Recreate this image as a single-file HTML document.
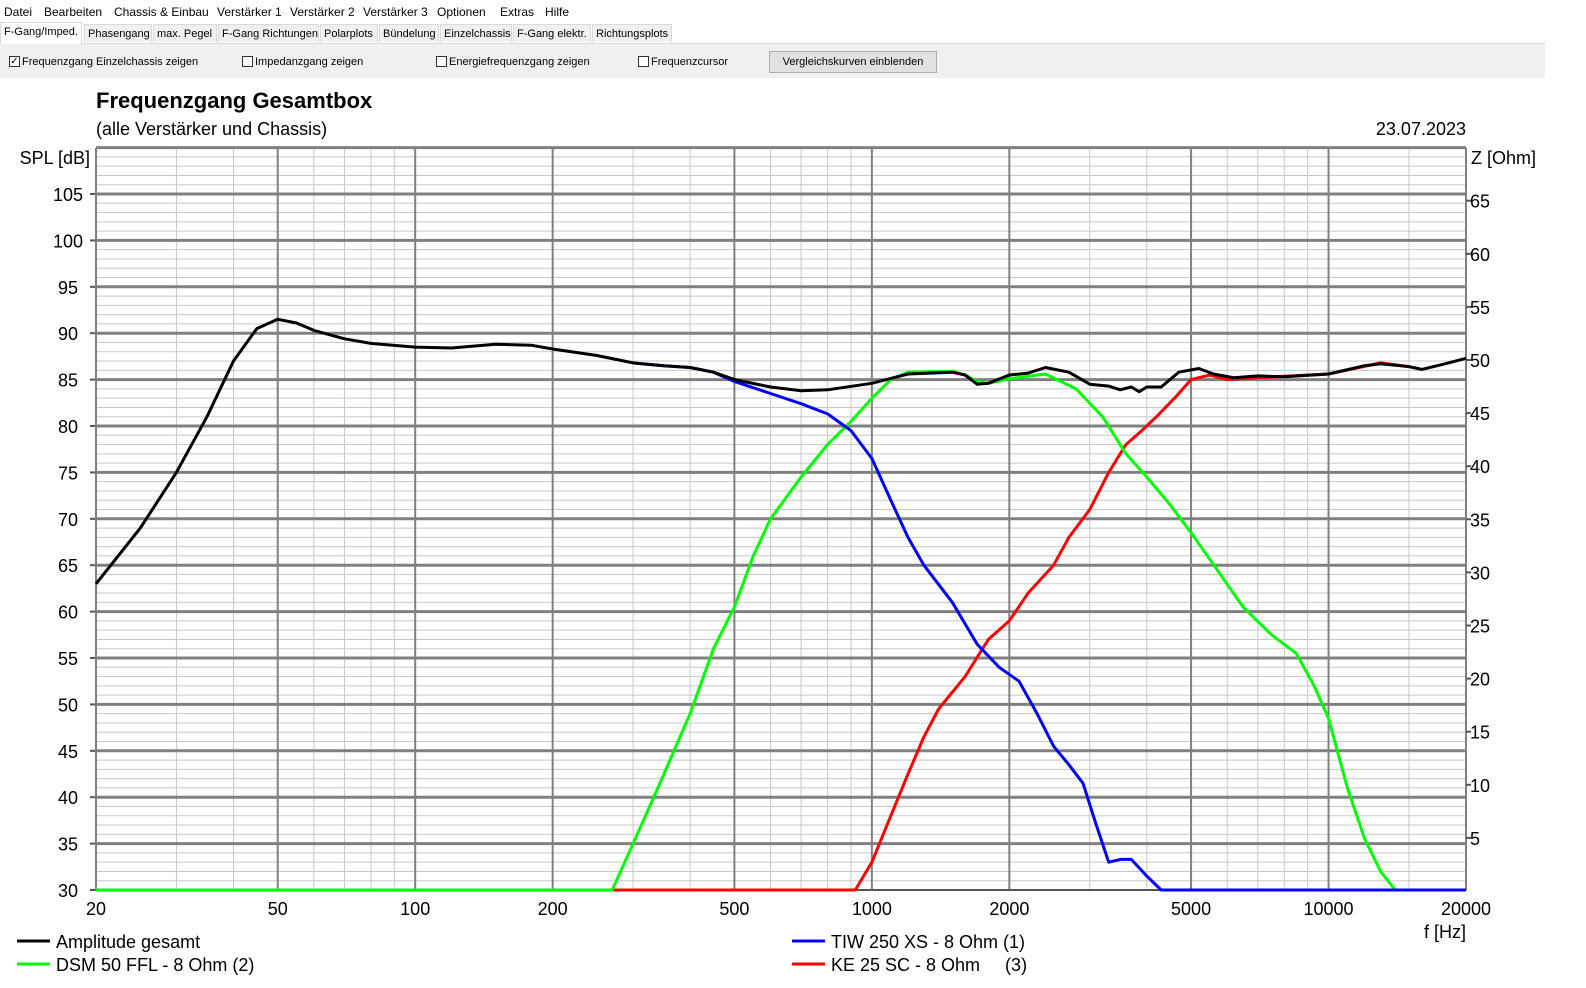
<!DOCTYPE html>
<html style="margin:0;padding:0;overflow:hidden"><head><meta charset="utf-8"><style>
html,body{margin:0;padding:0;overflow:hidden;background:#fff}
#root{position:fixed;left:0;top:0;width:1586px;height:988px;overflow:hidden;background:#fff;font-family:"Liberation Sans",sans-serif;transform-origin:0 0}
.menu{position:absolute;top:0;left:0;width:1586px;height:22px;font-size:12px}
.menu span{position:absolute;top:5px;white-space:nowrap}
.tabs{position:absolute;top:22px;left:0;width:1545px;height:21px;border-bottom:1px solid #d9d9d9;font-size:11px}
.tab{position:absolute;top:2px;height:18px;border:1px solid #d9d9d9;border-bottom:none;background:#f0f0f0;line-height:18px;padding:0 3px;box-sizing:border-box;white-space:nowrap;overflow:hidden}
.bar{position:absolute;top:44px;left:0;width:1545px;height:34px;background:#f0f0f0;font-size:11px}
.cb{position:absolute;top:12px;height:12px;line-height:12px;white-space:nowrap}
.cb i{display:inline-block;width:11px;height:11px;border:1px solid #333;background:#fff;vertical-align:top;margin-right:2px;box-sizing:border-box;font-style:normal;font-size:10px;line-height:10px;text-align:center}
.btn{position:absolute;left:769px;top:7px;width:168px;height:22px;border:1px solid #adadad;background:#e1e1e1;text-align:center;line-height:20px;box-sizing:border-box}
svg{display:block}
</style></head><body>
<div id="root">
<div class="menu"><span style="left:4px">Datei</span><span style="left:44px">Bearbeiten</span><span style="left:114px">Chassis &amp; Einbau</span><span style="left:217px">Verstärker 1</span><span style="left:290px">Verstärker 2</span><span style="left:363px">Verstärker 3</span><span style="left:437px">Optionen</span><span style="left:500px">Extras</span><span style="left:545px">Hilfe</span></div>
<div class="tabs">
<div class="tab" style="left:0;top:0;height:22px;width:82px;background:#fff">F-Gang/Imped.</div>
<div class="tab" style="left:84px;width:68px">Phasengang</div>
<div class="tab" style="left:153px;width:64px">max. Pegel</div>
<div class="tab" style="left:218px;width:101px">F-Gang Richtungen</div>
<div class="tab" style="left:320px;width:58px">Polarplots</div>
<div class="tab" style="left:379px;width:60px">Bündelung</div>
<div class="tab" style="left:440px;width:72px">Einzelchassis</div>
<div class="tab" style="left:513px;width:78px">F-Gang elektr.</div>
<div class="tab" style="left:592px;width:80px">Richtungsplots</div>
</div>
<div class="bar">
<div class="cb" style="left:9px"><i>✓</i>Frequenzgang Einzelchassis zeigen</div>
<div class="cb" style="left:242px"><i></i>Impedanzgang zeigen</div>
<div class="cb" style="left:436px"><i></i>Energiefrequenzgang zeigen</div>
<div class="cb" style="left:638px"><i></i>Frequenzcursor</div>
<div class="btn">Vergleichskurven einblenden</div>
</div>
<svg id="s" width="1586" height="988" style="position:absolute;left:0;top:0" font-family="Liberation Sans, sans-serif">
<g id="grid"></g>
<text x="96" y="108" font-size="22" font-weight="bold">Frequenzgang Gesamtbox</text>
<text x="96" y="135" font-size="18">(alle Verstärker und Chassis)</text>
<text x="1466" y="135" font-size="18" text-anchor="end">23.07.2023</text>
<text x="90" y="164" font-size="18" text-anchor="end">SPL [dB]</text>
<text x="1471" y="164" font-size="18">Z [Ohm]</text>
<text x="1466" y="938" font-size="18" text-anchor="end">f [Hz]</text>
<g id="lab" font-size="18"></g>
<g id="curves" fill="none" stroke-width="3" stroke-linejoin="round"></g>
<g font-size="18">
<line x1="17" y1="941" x2="50" y2="941" stroke="#000" stroke-width="3"/><text x="56" y="948">Amplitude gesamt</text>
<line x1="17" y1="964" x2="50" y2="964" stroke="#0f0" stroke-width="3"/><text x="56" y="971">DSM 50 FFL - 8 Ohm (2)</text>
<line x1="792" y1="941" x2="825" y2="941" stroke="#00f" stroke-width="3"/><text x="831" y="948">TIW 250 XS - 8 Ohm (1)</text>
<line x1="792" y1="964" x2="825" y2="964" stroke="#f00" stroke-width="3"/><text x="831" y="971" xml:space="preserve">KE 25 SC - 8 Ohm     (3)</text>
</g>
</svg>
</div>
<script>
const NS="http://www.w3.org/2000/svg";
const X0=96,X1=1466,Y0=148,Y1=890;
const fx=f=>X0+456.67*Math.log10(f/20);
const dy=d=>890-(d-30)*9.28;
const g=document.getElementById('grid'),lab=document.getElementById('lab');
function ln(x1,y1,x2,y2,c,w){const l=document.createElementNS(NS,'line');l.setAttribute('x1',x1);l.setAttribute('y1',y1);l.setAttribute('x2',x2);l.setAttribute('y2',y2);l.setAttribute('stroke',c);l.setAttribute('stroke-width',w);g.appendChild(l);}
function tx(x,y,s,a){const t=document.createElementNS(NS,'text');t.setAttribute('x',x);t.setAttribute('y',y);t.setAttribute('text-anchor',a);t.textContent=s;lab.appendChild(t);}
for(let d=31;d<110;d++){if(d%5)ln(X0,dy(d),X1,dy(d),'#c8c8c8',1);}
[30,40,60,70,80,90,300,400,600,700,800,900,3000,4000,6000,7000,8000,9000,15000].forEach(f=>ln(fx(f),Y0,fx(f),Y1,'#c8c8c8',1));
for(let d=30;d<=110;d+=5){if(d>30)ln(X0,dy(d),X1,dy(d),'#808080',3);if(d<=105){ln(X0-6,dy(d),X0,dy(d),'#555',2);tx(68,dy(d)+7,d,'middle');}}
[20,50,100,200,500,1000,2000,5000,10000,20000].forEach(f=>{ln(fx(f),Y0,fx(f),Y1,'#808080',2);tx(fx(f),915,f,'middle');});
ln(X0,Y1,X1,Y1,'#555',2);
for(let z=5;z<=65;z+=5){const y=891-z*10.62;ln(X1,y,X1+5,y,'#555',2);tx(1470,y+7,z,'start');}
const C={
"#000":[[20,63],[25,69],[30,75],[35,81],[40,87],[45,90.5],[50,91.5],[55,91.1],[60,90.3],[70,89.4],[80,88.9],[100,88.5],[120,88.4],[150,88.8],[180,88.7],[200,88.3],[250,87.6],[300,86.8],[350,86.5],[400,86.3],[450,85.8],[500,85.0],[600,84.2],[700,83.8],[800,83.9],[1000,84.6],[1200,85.6],[1500,85.8],[1600,85.5],[1700,84.5],[1800,84.6],[2000,85.5],[2200,85.7],[2400,86.3],[2700,85.8],[3000,84.5],[3300,84.3],[3500,83.9],[3700,84.2],[3850,83.7],[4000,84.2],[4300,84.2],[4700,85.8],[5200,86.2],[5600,85.6],[6200,85.2],[7000,85.4],[8000,85.3],[10000,85.6],[12000,86.5],[13000,86.7],[15000,86.4],[16000,86.1],[18000,86.7],[20000,87.3]],
"#f00":[[20,30],[920,30],[1000,33],[1100,38],[1200,42.5],[1300,46.5],[1400,49.5],[1600,53],[1800,57],[2000,59],[2200,62],[2500,65],[2700,68],[3000,71],[3300,75],[3600,78],[3900,79.5],[4200,81],[4600,83],[5000,85],[5500,85.5],[6000,85],[7000,85.2],[10000,85.6],[13000,86.8],[15000,86.4]],
"#0f0":[[20,30],[270,30],[300,35],[340,41],[400,49],[450,56],[500,60.5],[550,66],[600,70],[700,74.5],[800,78],[900,80.5],[1000,83],[1100,85],[1200,85.8],[1500,85.9],[1600,85.5],[1700,84.8],[1800,84.6],[2000,85.1],[2400,85.6],[2800,84],[3200,81],[3600,77],[4000,74.5],[4500,71.5],[5000,68.5],[5700,64.5],[6500,60.5],[7500,57.5],[8500,55.5],[9300,52],[10000,48.5],[11000,41],[12000,35.5],[13000,32],[14000,30],[20000,30]],
"#00f":[[300,86.8],[350,86.5],[400,86.3],[450,85.8],[500,84.8],[600,83.5],[700,82.4],[800,81.3],[900,79.5],[1000,76.5],[1100,72],[1200,68],[1300,65],[1500,61],[1700,56.5],[1900,54],[2100,52.5],[2300,49],[2500,45.5],[2700,43.5],[2900,41.5],[3100,37],[3300,33],[3500,33.3],[3700,33.3],[4000,31.5],[4300,30],[20000,30]]};
const cg=document.getElementById('curves');
["#f00","#0f0","#00f","#000"].forEach(c=>{const p=document.createElementNS(NS,'polyline');p.setAttribute('points',C[c].map(([f,d])=>fx(f).toFixed(1)+','+dy(d).toFixed(1)).join(' '));p.setAttribute('stroke',c);cg.appendChild(p);});
function fit(){const w=document.documentElement.clientWidth||innerWidth,h=document.documentElement.clientHeight||innerHeight;if(w&&h&&(Math.abs(w-1586)>2||Math.abs(h-988)>2))document.getElementById('root').style.transform='scale('+(w/1586)+','+(h/988)+')';}
fit();
</script>
</body></html>
